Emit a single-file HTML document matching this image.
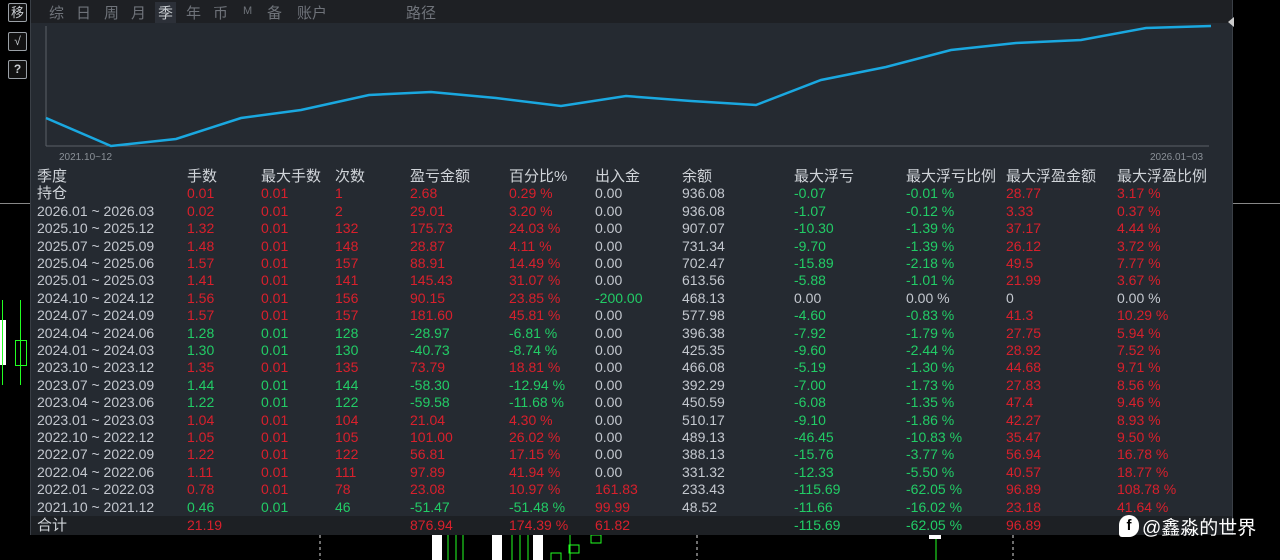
<!DOCTYPE html>
<html><head><meta charset="utf-8">
<style>
*{margin:0;padding:0;box-sizing:border-box}
body{width:1280px;height:560px;background:#000;position:relative;overflow:hidden;font-family:"Liberation Sans","Noto Sans CJK SC",sans-serif;font-size:14px;color:#c4c8cf}
.panel{position:absolute;left:30px;top:0;width:1203px;height:535px;background:#252a31;border-right:1px solid #3a3f46;border-left:1px solid #3a3f46}
.topbar{position:absolute;left:0;top:0;width:100%;height:23px;background:#1e2024}
.tab{position:absolute;top:2px;font-size:15px;color:#6f737a}
.btn{position:absolute;left:8px;width:19px;height:19px;border:1px solid #9aa0a6;border-radius:2px;color:#c8ccd0;font-size:12px;text-align:center;line-height:17px;background:#111}
.r{position:absolute;left:0;width:1200px;height:17px;line-height:17px}
.r span{position:absolute;white-space:nowrap}
.red{color:#d8202c}.grn{color:#22cc66}
.c0{left:6px}.c1{left:156px}.c2{left:230px}.c3{left:304px}.c4{left:379px}.c5{left:478px}.c6{left:564px}.c7{left:651px}.c8{left:763px}.c9{left:875px}.c10{left:975px}.c11{left:1086px}
.hd span{font-size:15px;color:#d0d4d9}
</style></head><body>
<div style="position:absolute;left:0;top:203px;width:30px;height:1px;background:#888"></div>
<div style="position:absolute;left:1233px;top:203px;width:47px;height:1px;background:#888"></div>
<div class="btn" style="top:3px;font-size:13px">移</div>
<div class="btn" style="top:32px">√</div>
<div class="btn" style="top:60px;font-weight:bold">?</div>
<!-- left candles -->
<div style="position:absolute;left:0;top:320px;width:6px;height:45px;background:#fff"></div>
<div style="position:absolute;left:2px;top:300px;width:1px;height:85px;background:#2f2"></div>
<div style="position:absolute;left:20px;top:300px;width:1px;height:85px;background:#2f2"></div>
<div style="position:absolute;left:15px;top:340px;width:12px;height:26px;border:1px solid #2f2"></div>
<!-- bottom candles -->
<svg style="position:absolute;left:0;top:535px" width="1280" height="25">
<g stroke="#ddd" stroke-dasharray="3,3"><line x1="320" y1="0" x2="320" y2="25"/><line x1="697" y1="0" x2="697" y2="25"/><line x1="1013" y1="0" x2="1013" y2="25"/></g>
<rect x="432" y="0" width="10" height="25" fill="#fff"/><rect x="492" y="0" width="10" height="25" fill="#fff"/><rect x="533" y="0" width="10" height="25" fill="#fff"/>
<g stroke="#2f2"><line x1="448" y1="0" x2="448" y2="25"/><line x1="456" y1="0" x2="456" y2="25"/><line x1="463" y1="0" x2="463" y2="25"/><line x1="512" y1="0" x2="512" y2="25"/><line x1="520" y1="0" x2="520" y2="25"/><line x1="528" y1="0" x2="528" y2="25"/><line x1="570" y1="0" x2="570" y2="25"/><line x1="936" y1="0" x2="936" y2="25"/></g>
<g fill="none" stroke="#2f2"><rect x="551" y="18" width="10" height="8"/><rect x="569" y="10" width="10" height="8"/><rect x="591" y="0" width="10" height="8"/></g>
<rect x="929" y="0" width="12" height="4" fill="#fff"/>
</svg>
<div class="panel">
<div class="topbar">
<span class="tab" style="left:18px">综</span><span class="tab" style="left:45px">日</span><span class="tab" style="left:73px">周</span><span class="tab" style="left:100px">月</span>
<span class="tab" style="left:124px;color:#c8ccd0;background:#2c3038;padding:0 3px">季</span><span class="tab" style="left:155px">年</span><span class="tab" style="left:182px">币</span><span class="tab" style="left:212px;font-size:11px;top:5px">M</span><span class="tab" style="left:236px">备</span><span class="tab" style="left:266px">账户</span><span class="tab" style="left:375px">路径</span>
</div>
<svg style="position:absolute;left:0;top:23px" width="1200" height="145">
<line x1="15" y1="3" x2="15" y2="123" stroke="#5a6068"/>
<line x1="15" y1="123" x2="1178" y2="123" stroke="#5a6068"/>
<polyline fill="none" stroke="#1aa8e0" stroke-width="2.5" points="15,95 80,123 145,116 210,95 270,87 338,72 400,69 465,75 530,83 595,73 660,78 725,82 790,57 855,44 920,27 985,20 1050,17 1115,5 1180,3"/>
<text x="28" y="137" font-size="10" fill="#8a9097" font-family="Liberation Sans">2021.10~12</text>
<text x="1119" y="137" font-size="10" fill="#8a9097" font-family="Liberation Sans">2026.01~03</text>
</svg>
<svg style="position:absolute;left:1197px;top:17px" width="6" height="10"><polygon points="6,0 6,10 0,5" fill="#ccc"/></svg>

<div class="r hd" style="top:168px"><span class="c0">季度</span><span class="c1">手数</span><span class="c2">最大手数</span><span class="c3">次数</span><span class="c4">盈亏金额</span><span class="c5">百分比%</span><span class="c6">出入金</span><span class="c7">余额</span><span class="c8">最大浮亏</span><span class="c9">最大浮亏比例</span><span class="c10">最大浮盈金额</span><span class="c11">最大浮盈比例</span></div>
<div class="r" style="top:185px"><span class="c0" style="font-size:15px;color:#d0d4d9">持仓</span><span class="c1 red">0.01</span><span class="c2 red">0.01</span><span class="c3 red">1</span><span class="c4 red">2.68</span><span class="c5 red">0.29 %</span><span class="c6">0.00</span><span class="c7">936.08</span><span class="c8 grn">-0.07</span><span class="c9 grn">-0.01 %</span><span class="c10 red">28.77</span><span class="c11 red">3.17 %</span></div>
<div class="r" style="top:203px"><span class="c0">2026.01 ~ 2026.03</span><span class="c1 red">0.02</span><span class="c2 red">0.01</span><span class="c3 red">2</span><span class="c4 red">29.01</span><span class="c5 red">3.20 %</span><span class="c6">0.00</span><span class="c7">936.08</span><span class="c8 grn">-1.07</span><span class="c9 grn">-0.12 %</span><span class="c10 red">3.33</span><span class="c11 red">0.37 %</span></div>
<div class="r" style="top:220px"><span class="c0">2025.10 ~ 2025.12</span><span class="c1 red">1.32</span><span class="c2 red">0.01</span><span class="c3 red">132</span><span class="c4 red">175.73</span><span class="c5 red">24.03 %</span><span class="c6">0.00</span><span class="c7">907.07</span><span class="c8 grn">-10.30</span><span class="c9 grn">-1.39 %</span><span class="c10 red">37.17</span><span class="c11 red">4.44 %</span></div>
<div class="r" style="top:238px"><span class="c0">2025.07 ~ 2025.09</span><span class="c1 red">1.48</span><span class="c2 red">0.01</span><span class="c3 red">148</span><span class="c4 red">28.87</span><span class="c5 red">4.11 %</span><span class="c6">0.00</span><span class="c7">731.34</span><span class="c8 grn">-9.70</span><span class="c9 grn">-1.39 %</span><span class="c10 red">26.12</span><span class="c11 red">3.72 %</span></div>
<div class="r" style="top:255px"><span class="c0">2025.04 ~ 2025.06</span><span class="c1 red">1.57</span><span class="c2 red">0.01</span><span class="c3 red">157</span><span class="c4 red">88.91</span><span class="c5 red">14.49 %</span><span class="c6">0.00</span><span class="c7">702.47</span><span class="c8 grn">-15.89</span><span class="c9 grn">-2.18 %</span><span class="c10 red">49.5</span><span class="c11 red">7.77 %</span></div>
<div class="r" style="top:272px"><span class="c0">2025.01 ~ 2025.03</span><span class="c1 red">1.41</span><span class="c2 red">0.01</span><span class="c3 red">141</span><span class="c4 red">145.43</span><span class="c5 red">31.07 %</span><span class="c6">0.00</span><span class="c7">613.56</span><span class="c8 grn">-5.88</span><span class="c9 grn">-1.01 %</span><span class="c10 red">21.99</span><span class="c11 red">3.67 %</span></div>
<div class="r" style="top:290px"><span class="c0">2024.10 ~ 2024.12</span><span class="c1 red">1.56</span><span class="c2 red">0.01</span><span class="c3 red">156</span><span class="c4 red">90.15</span><span class="c5 red">23.85 %</span><span class="c6 grn">-200.00</span><span class="c7">468.13</span><span class="c8">0.00</span><span class="c9">0.00 %</span><span class="c10">0</span><span class="c11">0.00 %</span></div>
<div class="r" style="top:307px"><span class="c0">2024.07 ~ 2024.09</span><span class="c1 red">1.57</span><span class="c2 red">0.01</span><span class="c3 red">157</span><span class="c4 red">181.60</span><span class="c5 red">45.81 %</span><span class="c6">0.00</span><span class="c7">577.98</span><span class="c8 grn">-4.60</span><span class="c9 grn">-0.83 %</span><span class="c10 red">41.3</span><span class="c11 red">10.29 %</span></div>
<div class="r" style="top:325px"><span class="c0">2024.04 ~ 2024.06</span><span class="c1 grn">1.28</span><span class="c2 grn">0.01</span><span class="c3 grn">128</span><span class="c4 grn">-28.97</span><span class="c5 grn">-6.81 %</span><span class="c6">0.00</span><span class="c7">396.38</span><span class="c8 grn">-7.92</span><span class="c9 grn">-1.79 %</span><span class="c10 red">27.75</span><span class="c11 red">5.94 %</span></div>
<div class="r" style="top:342px"><span class="c0">2024.01 ~ 2024.03</span><span class="c1 grn">1.30</span><span class="c2 grn">0.01</span><span class="c3 grn">130</span><span class="c4 grn">-40.73</span><span class="c5 grn">-8.74 %</span><span class="c6">0.00</span><span class="c7">425.35</span><span class="c8 grn">-9.60</span><span class="c9 grn">-2.44 %</span><span class="c10 red">28.92</span><span class="c11 red">7.52 %</span></div>
<div class="r" style="top:359px"><span class="c0">2023.10 ~ 2023.12</span><span class="c1 red">1.35</span><span class="c2 red">0.01</span><span class="c3 red">135</span><span class="c4 red">73.79</span><span class="c5 red">18.81 %</span><span class="c6">0.00</span><span class="c7">466.08</span><span class="c8 grn">-5.19</span><span class="c9 grn">-1.30 %</span><span class="c10 red">44.68</span><span class="c11 red">9.71 %</span></div>
<div class="r" style="top:377px"><span class="c0">2023.07 ~ 2023.09</span><span class="c1 grn">1.44</span><span class="c2 grn">0.01</span><span class="c3 grn">144</span><span class="c4 grn">-58.30</span><span class="c5 grn">-12.94 %</span><span class="c6">0.00</span><span class="c7">392.29</span><span class="c8 grn">-7.00</span><span class="c9 grn">-1.73 %</span><span class="c10 red">27.83</span><span class="c11 red">8.56 %</span></div>
<div class="r" style="top:394px"><span class="c0">2023.04 ~ 2023.06</span><span class="c1 grn">1.22</span><span class="c2 grn">0.01</span><span class="c3 grn">122</span><span class="c4 grn">-59.58</span><span class="c5 grn">-11.68 %</span><span class="c6">0.00</span><span class="c7">450.59</span><span class="c8 grn">-6.08</span><span class="c9 grn">-1.35 %</span><span class="c10 red">47.4</span><span class="c11 red">9.46 %</span></div>
<div class="r" style="top:412px"><span class="c0">2023.01 ~ 2023.03</span><span class="c1 red">1.04</span><span class="c2 red">0.01</span><span class="c3 red">104</span><span class="c4 red">21.04</span><span class="c5 red">4.30 %</span><span class="c6">0.00</span><span class="c7">510.17</span><span class="c8 grn">-9.10</span><span class="c9 grn">-1.86 %</span><span class="c10 red">42.27</span><span class="c11 red">8.93 %</span></div>
<div class="r" style="top:429px"><span class="c0">2022.10 ~ 2022.12</span><span class="c1 red">1.05</span><span class="c2 red">0.01</span><span class="c3 red">105</span><span class="c4 red">101.00</span><span class="c5 red">26.02 %</span><span class="c6">0.00</span><span class="c7">489.13</span><span class="c8 grn">-46.45</span><span class="c9 grn">-10.83 %</span><span class="c10 red">35.47</span><span class="c11 red">9.50 %</span></div>
<div class="r" style="top:446px"><span class="c0">2022.07 ~ 2022.09</span><span class="c1 red">1.22</span><span class="c2 red">0.01</span><span class="c3 red">122</span><span class="c4 red">56.81</span><span class="c5 red">17.15 %</span><span class="c6">0.00</span><span class="c7">388.13</span><span class="c8 grn">-15.76</span><span class="c9 grn">-3.77 %</span><span class="c10 red">56.94</span><span class="c11 red">16.78 %</span></div>
<div class="r" style="top:464px"><span class="c0">2022.04 ~ 2022.06</span><span class="c1 red">1.11</span><span class="c2 red">0.01</span><span class="c3 red">111</span><span class="c4 red">97.89</span><span class="c5 red">41.94 %</span><span class="c6">0.00</span><span class="c7">331.32</span><span class="c8 grn">-12.33</span><span class="c9 grn">-5.50 %</span><span class="c10 red">40.57</span><span class="c11 red">18.77 %</span></div>
<div class="r" style="top:481px"><span class="c0">2022.01 ~ 2022.03</span><span class="c1 red">0.78</span><span class="c2 red">0.01</span><span class="c3 red">78</span><span class="c4 red">23.08</span><span class="c5 red">10.97 %</span><span class="c6 red">161.83</span><span class="c7">233.43</span><span class="c8 grn">-115.69</span><span class="c9 grn">-62.05 %</span><span class="c10 red">96.89</span><span class="c11 red">108.78 %</span></div>
<div class="r" style="top:499px"><span class="c0">2021.10 ~ 2021.12</span><span class="c1 grn">0.46</span><span class="c2 grn">0.01</span><span class="c3 grn">46</span><span class="c4 grn">-51.47</span><span class="c5 grn">-51.48 %</span><span class="c6 red">99.99</span><span class="c7">48.52</span><span class="c8 grn">-11.66</span><span class="c9 grn">-16.02 %</span><span class="c10 red">23.18</span><span class="c11 red">41.64 %</span></div>
<div style="position:absolute;left:0;top:516px;width:1201px;height:19px;background:#1d2024"></div>
<div class="r" style="top:517px"><span class="c0" style="font-size:15px;color:#d0d4d9">合计</span><span class="c1 red">21.19</span><span class="c4 red">876.94</span><span class="c5 red">174.39 %</span><span class="c6 red">61.82</span><span class="c8 grn">-115.69</span><span class="c9 grn">-62.05 %</span><span class="c10 red">96.89</span></div>
</div>
<div style="position:absolute;left:1119px;top:515px;width:20px;height:22px;background:#fff;border-radius:10px 10px 10px 3px;color:#000;font-weight:bold;font-size:15px;text-align:center;line-height:22px">f</div>
<div style="position:absolute;left:1142px;top:513px;font-size:19px;color:#fff">@鑫淼的世界</div>
</body></html>
